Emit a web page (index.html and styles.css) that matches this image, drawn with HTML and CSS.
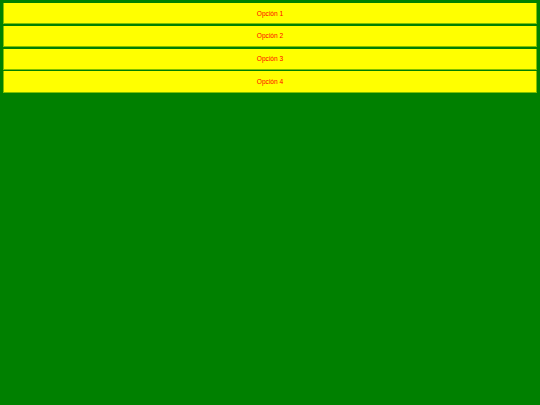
FILE: index.html
```html
<!DOCTYPE html>
<html lang="es">
<head>
<meta charset="utf-8">
<title>Opciones</title>
<link rel="stylesheet" href="styles.css">
</head>
<body>
<ul class="menu">
  <li class="menu-item">Opción 1</li>
  <li class="menu-item">Opción 2</li>
  <li class="menu-item">Opción 3</li>
  <li class="menu-item">Opción 4</li>
</ul>
</body>
</html>
```
FILE: styles.css
```css
html, body {
  margin: 0;
  padding: 0;
  background: #008000;
  height: 100%;
}
.menu {
  list-style: none;
  margin: 0;
  padding: 3px 3px 0 3px;
  display: flex;
  flex-direction: column;
  gap: 1.5px;
}
.menu-item {
  box-sizing: border-box;
  height: 21.25px;
  background: #ffff00;
  border-left: 1px solid #80c000;
  border-right: 1px solid #80c000;
  border-bottom: 1px solid #80c000;
  color: #ff0000;
  font-family: "Liberation Sans", Arial, sans-serif;
  font-size: 6.6px;
  display: flex;
  align-items: center;
  justify-content: center;
}
```
